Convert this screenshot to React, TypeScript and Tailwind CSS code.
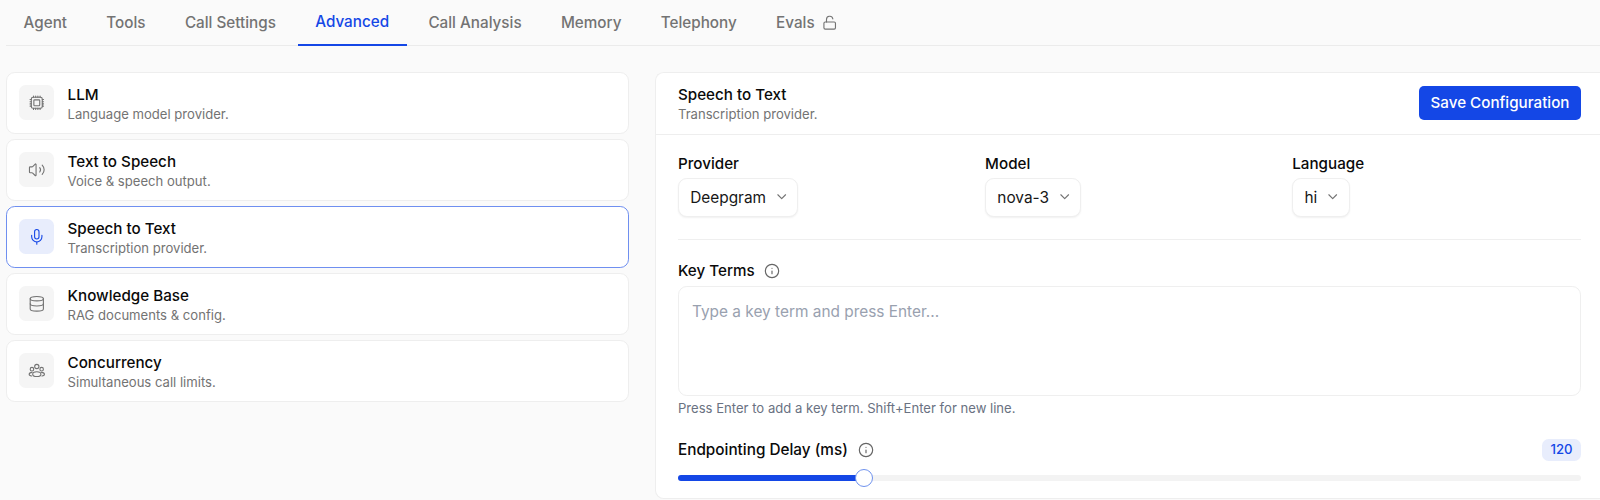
import { Volume2, Mic, Database, LockOpen, Info, ChevronDown } from "lucide-react";

type IconProps = { size?: number; strokeWidth?: number };

const Chip = ({ size = 18, strokeWidth = 1.5 }: IconProps) => (
  <svg width={size} height={size} viewBox="0 0 24 24" fill="none" stroke="currentColor" strokeWidth={strokeWidth} strokeLinecap="round" strokeLinejoin="round">
    <rect x="4.5" y="4.5" width="15" height="15" rx="2.5" />
    <rect x="8" y="8" width="8" height="8" rx="1" />
    <path d="M7.5 2.8v1.7M10.5 2.8v1.7M13.5 2.8v1.7M16.5 2.8v1.7M7.5 19.5v1.7M10.5 19.5v1.7M13.5 19.5v1.7M16.5 19.5v1.7M2.8 7.5h1.7M2.8 10.5h1.7M2.8 13.5h1.7M2.8 16.5h1.7M19.5 7.5h1.7M19.5 10.5h1.7M19.5 13.5h1.7M19.5 16.5h1.7" />
  </svg>
);

const Group = ({ size = 18, strokeWidth = 1.5 }: IconProps) => (
  <svg width={size} height={size} viewBox="0 0 24 24" fill="none" stroke="currentColor" strokeWidth={strokeWidth} strokeLinecap="round" strokeLinejoin="round">
    <circle cx="12" cy="6.2" r="2.9" />
    <circle cx="5.4" cy="9.8" r="2.4" />
    <circle cx="18.6" cy="9.8" r="2.4" />
    <ellipse cx="12" cy="16.6" rx="5.6" ry="3.2" />
    <path d="M5.6 14.2C3 14.4 1.6 15.5 1.6 16.8c0 1.2 1.2 2.1 3.4 2.3" />
    <path d="M18.4 14.2c2.6.2 4 1.3 4 2.6 0 1.2-1.2 2.1-3.4 2.3" />
  </svg>
);

const tabs = ["Agent", "Tools", "Call Settings", "Advanced", "Call Analysis", "Memory", "Telephony", "Evals"];
const items = [
  { t: "LLM", d: "Language model provider.", I: Chip },
  { t: "Text to Speech", d: "Voice & speech output.", I: Volume2 },
  { t: "Speech to Text", d: "Transcription provider.", I: Mic, active: true },
  { t: "Knowledge Base", d: "RAG documents & config.", I: Database },
  { t: "Concurrency", d: "Simultaneous call limits.", I: Group },
];

function Select({ label, value }: { label: string; value: string }) {
  return (
    <div className="flex flex-col items-start gap-[2.4px]">
      <span className="text-[15.2px] leading-[22px] font-medium text-[#0a0a0a]">{label}</span>
      <div className="h-[39px] pl-[11.2px] pr-[8px] flex items-center gap-[8px] bg-white border border-[#efefef] rounded-[8.8px] shadow-[0_1px_2px_rgba(0,0,0,0.06)] text-[15.4px] text-[#171717]">
        {value}
        <ChevronDown size={15.4} strokeWidth={1.75} className="text-[#737373]" />
      </div>
    </div>
  );
}

export default function App() {
  return (
    <div className="h-[500px] overflow-hidden bg-[#fafafa] pl-[6px] font-['Inter',sans-serif]">
      <div className="flex gap-[4.1px] h-[46px] border-b border-[#ebebeb]">
        {tabs.map((t) => (
          <div
            key={t}
            className={`px-[17.6px] h-[46px] flex items-center gap-[7.5px] text-[15.25px] font-medium ${t === "Advanced" ? "text-[#1447e6] border-b-2 border-[#1447e6]" : "text-[#737373]"}`}
          >
            {t}
            {t === "Evals" && <LockOpen size={15.4} strokeWidth={1.75} />}
          </div>
        ))}
      </div>
      <div className="flex gap-[25.6px] pt-[25.6px]">
        <div className="w-[623.4px] shrink-0 flex flex-col gap-[4.4px]">
          {items.map(({ t, d, I, active }) => (
            <div
              key={t}
              className={`h-[62.6px] flex items-center gap-[13.2px] px-[12.2px] bg-white rounded-[8.8px] border ${active ? "border-[#6f8ff0]" : "border-[#eeeeee]"}`}
            >
              <div className={`w-[35.2px] h-[35.2px] rounded-[6.6px] flex items-center justify-center ${active ? "bg-[#e8edfc] text-[#1447e6]" : "bg-[#f5f5f5] text-[#737373]"}`}>
                <I size={17.6} strokeWidth={1.5} />
              </div>
              <div className="flex flex-col pt-[1px]">
                <span className="text-[15.2px] leading-[21px] font-medium text-[#0a0a0a]">{t}</span>
                <span className="text-[13.1px] leading-[18px] text-[#737373]">{d}</span>
              </div>
            </div>
          ))}
        </div>
        <div className="flex-1 h-[427px] bg-white rounded-l-[8.8px] border border-r-0 border-[#eeeeee]">
          <div className="h-[62px] flex items-center justify-between pl-[22px] pr-[19px] border-b border-[#eeeeee]">
            <div className="flex flex-col">
              <span className="text-[15.2px] leading-[21px] font-medium text-[#0a0a0a]">Speech to Text</span>
              <span className="text-[13.1px] leading-[18px] text-[#737373]">Transcription provider.</span>
            </div>
            <button className="h-[34px] w-[162px] bg-[#1447e6] text-white text-[15.2px] font-medium rounded-[5px]">Save Configuration</button>
          </div>
          <div className="pl-[22px] pr-[19px] pt-[18.6px]">
            <div className="grid grid-cols-3 gap-[18.4px] pb-[22px] border-b border-[#efefef]">
              <Select label="Provider" value="Deepgram" />
              <Select label="Model" value="nova-3" />
              <Select label="Language" value="hi" />
            </div>
            <div className="flex items-center gap-[9px] mt-[20.8px] h-[22px]">
              <span className="text-[15.2px] font-medium text-[#0a0a0a]">Key Terms</span>
              <Info size={16} strokeWidth={1.75} className="text-[#666]" />
            </div>
            <div className="mt-[3.4px] h-[110px] border border-[#efefef] rounded-[8.8px] px-[13px] py-[14px] text-[15.4px] leading-[22px] text-[#99a1af]">
              Type a key term and press Enter...
            </div>
            <p className="mt-[4.4px] text-[13.1px] leading-[17.6px] text-[#6a7282]">Press Enter to add a key term. Shift+Enter for new line.</p>
            <div className="flex items-center justify-between mt-[21.5px] h-[22px]">
              <div className="flex items-center gap-[10px]">
                <span className="text-[15.3px] font-medium text-[#0a0a0a]">Endpointing Delay (ms)</span>
                <Info size={16} strokeWidth={1.75} className="text-[#666]" />
              </div>
              <span className="w-[39px] h-[22px] rounded-[6.6px] bg-[#e8edfc] text-[#1447e6] text-[13.2px] font-medium flex items-center justify-center">120</span>
            </div>
            <div className="relative mt-[13.5px] h-[6px] rounded-full bg-[#f3f3f3]">
              <div className="h-full w-[186px] rounded-full bg-[#1447e6]" />
              <div className="absolute left-[177.5px] top-[-5.8px] w-[17.6px] h-[17.6px] rounded-full bg-white border border-[#6f92ee]" />
            </div>
          </div>
        </div>
      </div>
    </div>
  );
}
